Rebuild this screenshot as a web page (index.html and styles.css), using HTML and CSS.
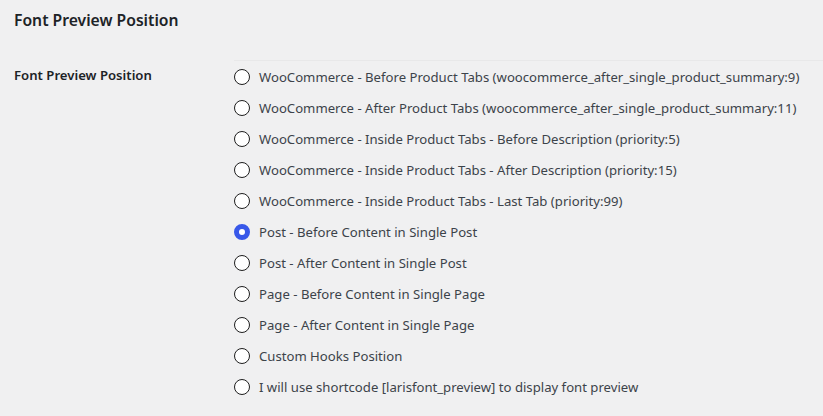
FILE: index.html
```html
<!DOCTYPE html>
<html lang="en">
<head>
    <meta charset="UTF-8">
    <meta name="viewport" content="width=device-width, initial-scale=1.0">
    <title>Font Preview Position</title>
    <link rel="stylesheet" href="styles.css">
</head>
<body>
    <div class="wrap">
        <h2 class="section-title">Font Preview Position</h2>

        <div class="form-row">
            <div class="form-label">Font Preview Position</div>
            <fieldset class="form-field">
                <label class="radio-row"><input type="radio" name="preview_position" value="before_tabs"> WooCommerce - Before Product Tabs (woocommerce_after_single_product_summary:9)</label>
                <label class="radio-row"><input type="radio" name="preview_position" value="after_tabs"> WooCommerce - After Product Tabs (woocommerce_after_single_product_summary:11)</label>
                <label class="radio-row"><input type="radio" name="preview_position" value="tab_before_desc"> WooCommerce - Inside Product Tabs - Before Description (priority:5)</label>
                <label class="radio-row"><input type="radio" name="preview_position" value="tab_after_desc"> WooCommerce - Inside Product Tabs - After Description (priority:15)</label>
                <label class="radio-row"><input type="radio" name="preview_position" value="tab_last"> WooCommerce - Inside Product Tabs - Last Tab (priority:99)</label>
                <label class="radio-row"><input type="radio" name="preview_position" value="post_before" checked> Post - Before Content in Single Post</label>
                <label class="radio-row"><input type="radio" name="preview_position" value="post_after"> Post - After Content in Single Post</label>
                <label class="radio-row"><input type="radio" name="preview_position" value="page_before"> Page - Before Content in Single Page</label>
                <label class="radio-row"><input type="radio" name="preview_position" value="page_after"> Page - After Content in Single Page</label>
                <label class="radio-row"><input type="radio" name="preview_position" value="custom_hooks"> Custom Hooks Position</label>
                <label class="radio-row"><input type="radio" name="preview_position" value="shortcode"> I will use shortcode [larisfont_preview] to display font preview</label>
            </fieldset>
        </div>
    </div>
</body>
</html>
```

FILE: styles.css
```css
/* Base admin look */
body {
    font-family: 'Noto Sans', 'Open Sans', sans-serif;
    margin: 0;
    padding: 0;
    background-color: #f0f0f1;
    color: #3c434a;
    font-size: 13.15px;
}

.wrap {
    padding: 9px 0 0 14px;
}

.section-title {
    margin: 0;
    font-size: 15.7px;
    line-height: 22px;
    font-weight: 600;
    color: #1d2327;
}

/* Settings row */
.form-row {
    display: flex;
    margin-top: 29px;
}
.form-label {
    width: 220px;
    flex-shrink: 0;
    padding-top: 5px;
    font-weight: 600;
    line-height: 20px;
    color: #1d2327;
}
.form-field {
    flex: 1;
    min-width: 0;
    margin: 0;
    padding: 0;
    border: none;
    border-top: 1px solid #e8e8e9;
    display: flex;
    flex-direction: column;
}

.radio-row {
    display: flex;
    align-items: center;
    height: 31px;
    line-height: 20px;
    white-space: nowrap;
}

/* Radio buttons */
.radio-row input[type="radio"] {
    appearance: none;
    -webkit-appearance: none;
    width: 16px;
    height: 16px;
    margin: 1px 9px 0 0;
    border: 1.5px solid #1e1e1e;
    border-radius: 50%;
    background-color: #fff;
    box-sizing: border-box;
    flex-shrink: 0;
}
.radio-row input[type="radio"]:checked {
    border: 5px solid #3858e9;
}
```
